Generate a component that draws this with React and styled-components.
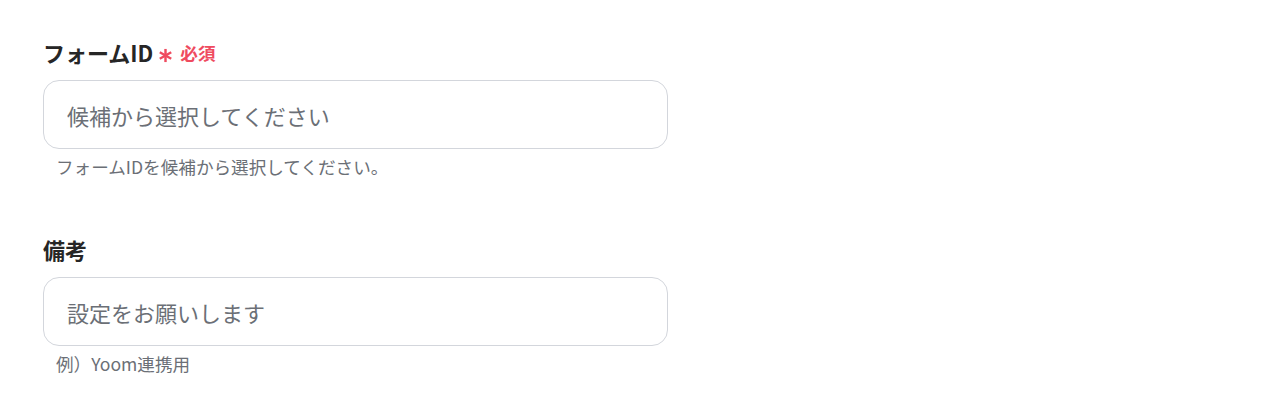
import React from 'react'
import styled, { createGlobalStyle } from 'styled-components'

const GlobalStyle = createGlobalStyle`
  body {
    margin: 0;
    background: #ffffff;
    font-family: "Noto Sans CJK JP", "Noto Sans", sans-serif;
  }
`

const Page = styled.div`
  padding: 36px 0 0 43px;
  display: flex;
  flex-direction: column;
  gap: 54px;
`

const Field = styled.div`
  width: 625px;
  display: flex;
  flex-direction: column;
`

const LabelRow = styled.div`
  display: flex;
  align-items: center;
  height: 32px;
  margin-bottom: 12px;
`

const Label = styled.span`
  font-size: 22px;
  font-weight: 700;
  color: #262626;
`

const Star = styled.svg`
  width: 15px;
  height: 15px;
  margin: 6px 7px 0 5px;
`

const Required = styled.span`
  color: #ef4b5f;
  font-size: 17.6px;
  font-weight: 700;
`

const Input = styled.input`
  box-sizing: border-box;
  width: 100%;
  height: 69px;
  border: 1px solid #d3d6dc;
  border-radius: 16px;
  padding: 0 23px;
  font-family: inherit;
  font-size: 22px;
  color: #333;
  background: #fff;
  outline: none;
  &::placeholder {
    color: #6b6f76;
  }
`

const Help = styled.p`
  margin: 6px 0 0 13px;
  font-size: 17.6px;
  line-height: 24px;
  color: #6b6f76;
`

const Asterisk = () => (
  <Star viewBox='0 0 16 16'>
    <g stroke='#ef4b5f' strokeWidth='2.6' strokeLinecap='butt'>
      <line x1='8' y1='1' x2='8' y2='15' />
      <line x1='1.9' y1='4.5' x2='14.1' y2='11.5' />
      <line x1='1.9' y1='11.5' x2='14.1' y2='4.5' />
    </g>
  </Star>
)

const FormField = ({ label, required, placeholder, help }) => (
  <Field>
    <LabelRow>
      <Label>{label}</Label>
      {required && (
        <>
          <Asterisk />
          <Required>必須</Required>
        </>
      )}
    </LabelRow>
    <Input type='text' placeholder={placeholder} />
    <Help>{help}</Help>
  </Field>
)

const App = () => (
  <>
    <GlobalStyle />
    <Page>
      <FormField
        label='フォームID'
        required
        placeholder='候補から選択してください'
        help='フォームIDを候補から選択してください。'
      />
      <FormField
        label='備考'
        placeholder='設定をお願いします'
        help='例）Yoom連携用'
      />
    </Page>
  </>
)

export default App
